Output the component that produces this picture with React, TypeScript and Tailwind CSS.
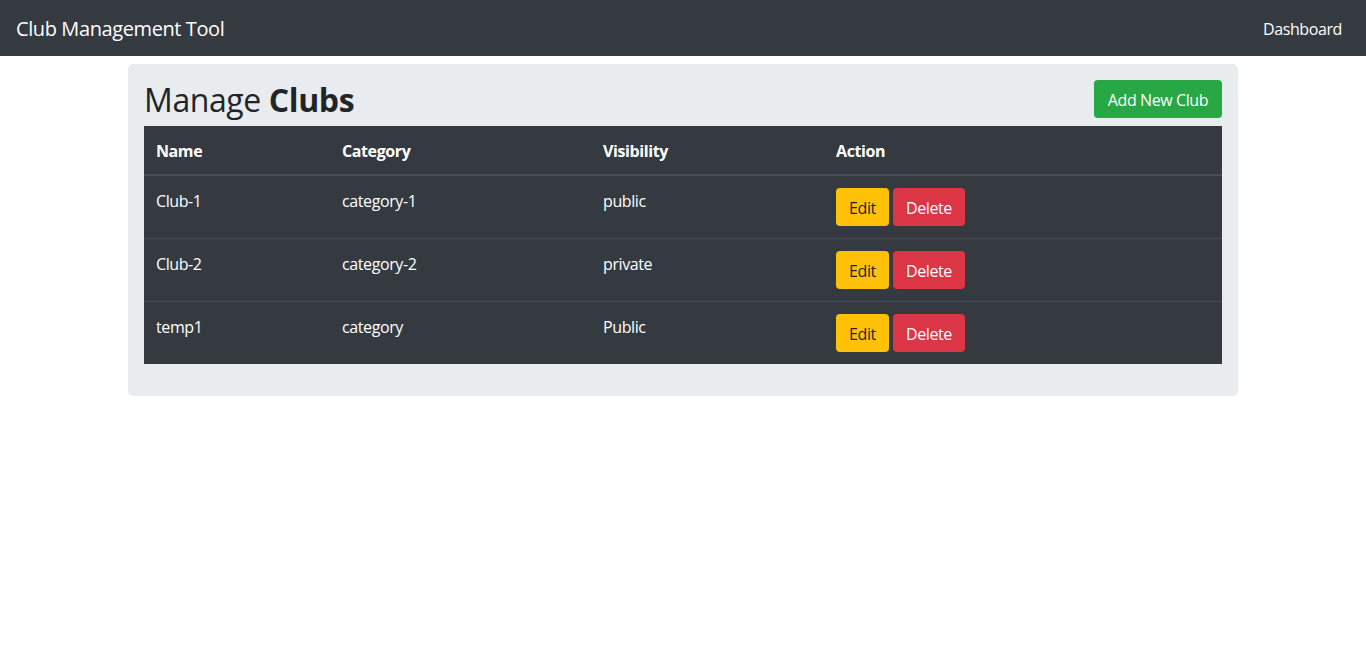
import React from 'react'

const clubs = [
  { name: 'Club-1', category: 'category-1', visibility: 'public' },
  { name: 'Club-2', category: 'category-2', visibility: 'private' },
  { name: 'temp1', category: 'category', visibility: 'Public' },
]

export default function App() {
  return (
    <div className="min-h-screen bg-white text-[16px] leading-[24px] tracking-[-0.025em] text-[#212529] font-['Open_Sans',sans-serif]">
      <nav className="flex h-[56px] items-center justify-between bg-[#343a40] px-4 pt-[2px]">
        <a className="text-[20px] leading-[30px] text-white">Club Management Tool</a>
        <a className="px-2 text-white">Dashboard</a>
      </nav>

      <div className="mx-auto w-[1110px] pt-2">
        <div className="rounded-[5px] bg-[#e9ecef] p-4">
          <div className="mb-2 flex items-start justify-between">
            <h2 className="pt-[2px] text-[32px] leading-[36px] font-medium">
              Manage <b className="font-bold">Clubs</b>
            </h2>
            <button className="h-[38px] w-[128px] rounded-[4px] bg-[#28a745] pt-[1px] text-white">Add New Club</button>
          </div>

          <table className="mb-4 w-full table-fixed border-collapse bg-[#343a40] text-white">
            <colgroup>
              <col className="w-[186px]" />
              <col className="w-[261px]" />
              <col className="w-[233px]" />
              <col />
            </colgroup>
            <thead>
              <tr className="border-b-2 border-[#454d55]">
                <th className="px-3 pt-[13px] pb-[11px] text-left align-bottom font-bold">Name</th>
                <th className="px-3 pt-[13px] pb-[11px] text-left align-bottom font-bold">Category</th>
                <th className="px-3 pt-[13px] pb-[11px] text-left align-bottom font-bold">Visibility</th>
                <th className="px-3 pt-[13px] pb-[11px] text-left align-bottom font-bold">Action</th>
              </tr>
            </thead>
            <tbody>
              {clubs.map((c, i) => (
                <tr key={c.name} className={i > 0 ? 'border-t border-[#454d55]' : ''}>
                  <td className="px-3 pt-[13px] pb-3 align-top">{c.name}</td>
                  <td className="px-3 pt-[13px] pb-3 align-top">{c.category}</td>
                  <td className="px-3 pt-[13px] pb-3 align-top">{c.visibility}</td>
                  <td className="p-3 align-top">
                    <div className="flex gap-1">
                      <button className="h-[38px] w-[53px] rounded-[4px] bg-[#ffc107] pt-[1px] text-[#212529]">Edit</button>
                      <button className="h-[38px] w-[72px] rounded-[4px] bg-[#dc3545] pt-[1px] text-white">Delete</button>
                    </div>
                  </td>
                </tr>
              ))}
            </tbody>
          </table>
        </div>
      </div>
    </div>
  )
}
